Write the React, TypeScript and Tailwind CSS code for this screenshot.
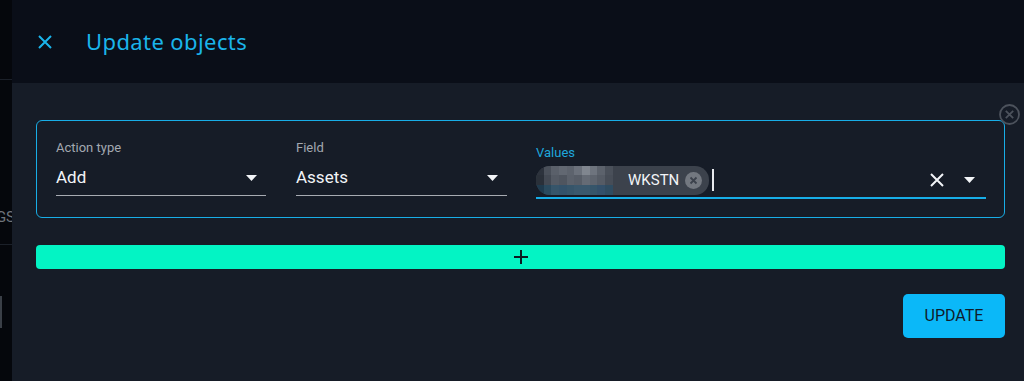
import React from "react";

const Tri = () => (
  <svg width="11" height="6" viewBox="0 0 11 6"><path d="M0 0 L11 0 L5.5 6 Z" fill="#f2f4f7" /></svg>
);

const blocks: string[][] = [
  ["#2d333d", "#4a505a", "#5a606a", "#626872", "#5d636d", "#6b717b", "#80868f", "#6e747e", "#5c626c", "#4a505a", "#3c424c", "#3c424c"],
  ["#2a3039", "#434953", "#545a64", "#4f555f", "#5b616b", "#575d67", "#656b75", "#5e646e", "#555b65", "#474d57", "#3c424c", "#3c424c"],
  ["#1f3a4d", "#2a4a5e", "#36556a", "#33526a", "#36556a", "#3a586d", "#3a586d", "#36556a", "#33506a", "#2f4c61", "#3c424c", "#3c424c"],
];

function Field({ label, value, width }: { label: string; value: string; width: string }) {
  return (
    <div className={`flex flex-col ${width}`}>
      <div className="h-[16px] text-[13px] leading-[16px] text-[#a3a8b0]">{label}</div>
      <div className="mt-[5px] flex h-[35px] items-center justify-between border-b border-[#a7abb2] pr-[9px]">
        <span className="text-[17px] text-[#f2f4f7]">{value}</span>
        <Tri />
      </div>
    </div>
  );
}

export default function App() {
  return (
    <div className="flex h-[381px] w-[1024px] overflow-hidden" style={{ fontFamily: "Roboto, 'Noto Sans', sans-serif" }}>
      <div className="flex w-[12px] shrink-0 flex-col bg-[#05070c]">
        <div className="h-[80px] border-b border-[#1b2029]" />
        <div className="relative mt-[127px] h-[20px] overflow-hidden">
          <span className="absolute right-[-3px] top-0 text-[15px] leading-[20px] text-[#6f747c]">GS</span>
        </div>
        <div className="mt-[17px] h-px bg-[#1b2029]" />
        <div className="mt-[51px] h-[32px] w-[2px] bg-[#3a3f47]" />
      </div>
      <div className="flex flex-1 flex-col">
        <div className="flex h-[83px] items-center bg-[#0a0e18]">
          <svg className="ml-[26px]" width="14" height="14" viewBox="0 0 14 14">
            <path d="M1 1 L13 13 M13 1 L1 13" stroke="#1ab4ea" strokeWidth="2" />
          </svg>
          <span className="ml-[34px] text-[22px] tracking-[0.4px] text-[#1ab4ea]" style={{ fontFamily: "'Noto Sans', sans-serif" }}>
            Update objects
          </span>
        </div>
        <div className="flex flex-1 flex-col bg-[#161c27] pl-[24px] pr-[19px] pt-[37px]">
          <div className="relative flex h-[98px] items-start rounded-[6px] border border-[#18ade6] pl-[19px] pt-[19px]">
            <svg className="absolute right-[-16px] top-[-17px]" width="21" height="21" viewBox="0 0 21 21">
              <circle cx="10.5" cy="10.5" r="9.5" fill="none" stroke="#4c525c" strokeWidth="1.8" />
              <path d="M6.8 6.8 L14.2 14.2 M14.2 6.8 L6.8 14.2" stroke="#4c525c" strokeWidth="1.8" />
            </svg>
            <Field label="Action type" value="Add" width="w-[210px]" />
            <div className="w-[30px]" />
            <Field label="Field" value="Assets" width="w-[211px]" />
            <div className="w-[29px]" />
            <div className="mt-[5px] flex w-[450px] flex-col">
              <div className="h-[16px] text-[13px] leading-[16px] text-[#1ea7dc]">Values</div>
              <div className="mt-[2px] flex h-[36px] items-center border-b-2 border-[#17aee8] pr-[11px]">
                <div className="flex h-[29px] items-center overflow-hidden rounded-[14px] bg-[#3c424c]">
                  <div className="flex h-[29px] w-[92px] flex-col">
                    {blocks.map((row, i) => (
                      <div key={i} className="flex flex-1">
                        {row.map((c, j) => (
                          <div key={j} className="flex-1" style={{ background: c }} />
                        ))}
                      </div>
                    ))}
                  </div>
                  <span className="text-[15px] text-[#f2f4f7]">WKSTN</span>
                  <svg className="ml-[6px] mr-[7px]" width="17" height="17" viewBox="0 0 17 17">
                    <circle cx="8.5" cy="8.5" r="8.5" fill="#737880" />
                    <path d="M5.5 5.5 L11.5 11.5 M11.5 5.5 L5.5 11.5" stroke="#3c424c" strokeWidth="1.8" />
                  </svg>
                </div>
                <div className="ml-[3px] h-[22px] w-[1.5px] bg-[#e8eaee]" />
                <div className="flex-1" />
                <svg width="14" height="14" viewBox="0 0 14 14">
                  <path d="M1 1 L13 13 M13 1 L1 13" stroke="#f2f4f7" strokeWidth="2" />
                </svg>
                <div className="ml-[20px]">
                  <Tri />
                </div>
              </div>
            </div>
          </div>
          <button className="mt-[27px] flex h-[24px] items-center justify-center rounded-[4px] bg-[#03f4c4]">
            <svg width="14" height="14" viewBox="0 0 14 14">
              <path d="M7 0 V14 M0 7 H14" stroke="#0e1a22" strokeWidth="2" />
            </svg>
          </button>
          <div className="mt-[25px] flex justify-end">
            <button className="h-[44px] w-[102px] rounded-[5px] bg-[#0bb8f8] text-[16px] text-[#0f1c2b]">UPDATE</button>
          </div>
        </div>
      </div>
    </div>
  );
}
